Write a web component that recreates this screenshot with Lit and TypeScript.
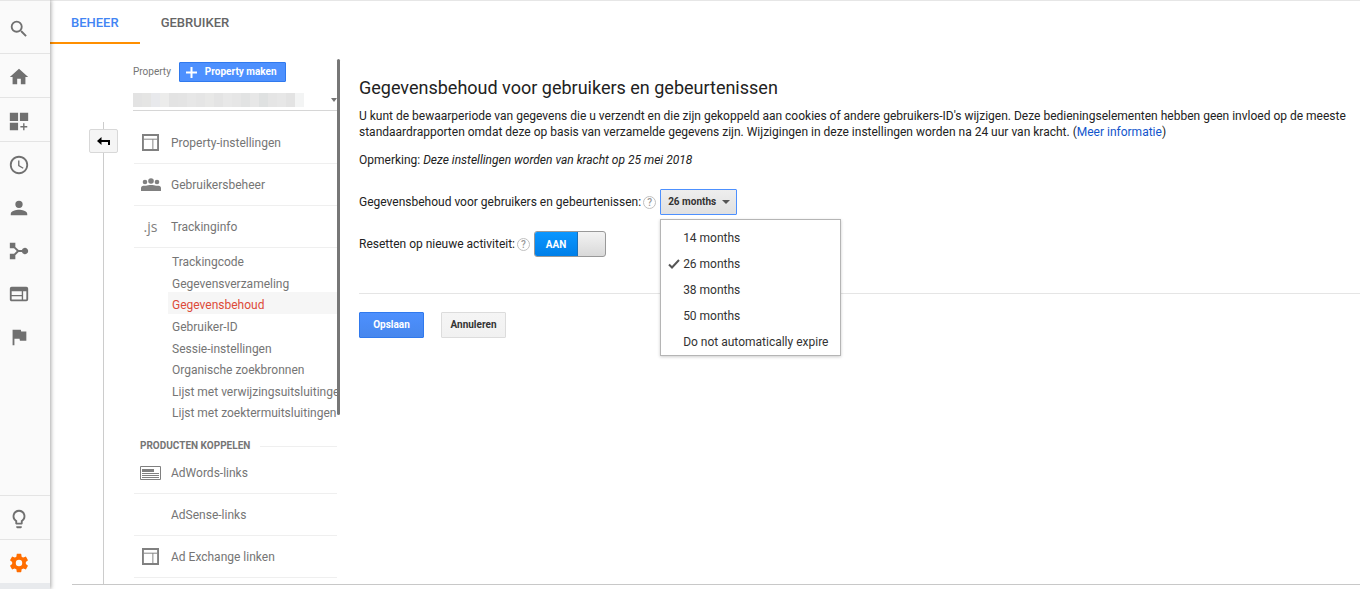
import { LitElement, html, css, svg, nothing } from "lit";
import { customElement, state } from "lit/decorators.js";
import { classMap } from "lit/directives/class-map.js";

const railIcons = {
  search: svg`<path d="M15.500 14h-.79l-.28-.27A6.470 6.470 0 0 0 16 9.500 6.500 6.500 0 1 0 9.500 16c1.610 0 3.090-.59 4.230-1.570l.27.28v.79l5 4.990L20.490 19l-4.990-5zm-6 0C7.010 14 5 11.990 5 9.500S7.010 5 9.500 5 14 7.010 14 9.500 11.990 14 9.500 14z"/>`,
  home: svg`<path d="M10 20v-6h4v6h5v-8h3L12 3 2 12h3v8z"/>`,
  dashboard: svg`<path d="M2 3h9v9H2zM13 3h9v9h-9zM2 14h9v8H2zM16.500 14.500h1.500v3h3v1.500h-3v3h-1.500v-3h-3v-1.500h3z"/>`,
  clock: svg`<path d="M11.990 2C6.470 2 2 6.480 2 12s4.470 10 9.990 10C17.520 22 22 17.520 22 12S17.520 2 11.990 2zM12 20a8 8 0 1 1 0-16 8 8 0 0 1 0 16zm.5-13H11v6l5.250 3.150.75-1.230-4.500-2.670z"/>`,
  person: svg`<path d="M12 12a4 4 0 1 0 0-8 4 4 0 0 0 0 8zm0 2c-3 0-9 1.300-9 4.500V20h18v-1.500c0-3.200-6-4.500-9-4.500z"/>`,
  flow: svg`<path d="M2 3h6v4.600l3.600 3.400h3.600a3.500 3.500 0 1 1 0 2h-3.600L8 16.600V21H2v-6h4.600l3-3-3-3H2z"/>`,
  web: svg`<path d="M20 4H4a2 2 0 0 0-2 2v12c0 1.100.9 2 2 2h16a2 2 0 0 0 2-2V6a2 2 0 0 0-2-2zm-5 14H4v-3.500h11V18zm0-5H4V9h11v4zm5 5h-3.500V9H20v9z"/>`,
  flag: svg`<path d="M14.400 6 14 4H5v17h2v-7h5.600l.4 2h7V6z"/>`,
  bulb: svg`<path d="M9 21c0 .55.45 1 1 1h4c.55 0 1-.45 1-1v-1H9v1zm3-19a7 7 0 0 0-4 12.740V17c0 .55.45 1 1 1h6c.55 0 1-.45 1-1v-2.260A7 7 0 0 0 12 2zm2.850 11.100-.85.6V16h-4v-2.300l-.85-.6A5 5 0 1 1 14.850 13.100z"/>`,
  gear: svg`<path d="M19.430 12.980c.04-.32.07-.64.07-.98s-.03-.66-.07-.98l2.110-1.650c.19-.15.24-.42.12-.64l-2-3.460c-.12-.22-.39-.3-.61-.22l-2.490 1c-.52-.4-1.080-.73-1.690-.98l-.38-2.650A.49.49 0 0 0 14 2h-4c-.25 0-.46.18-.49.42l-.38 2.650c-.61.25-1.170.59-1.690.98l-2.490-1c-.23-.09-.49 0-.61.22l-2 3.460c-.13.22-.07.49.12.64l2.110 1.650c-.04.32-.07.65-.07.98s.03.66.07.98l-2.110 1.650c-.19.15-.24.42-.12.64l2 3.460c.12.22.39.3.61.22l2.490-1c.52.4 1.080.73 1.690.98l.38 2.650c.03.24.24.42.49.42h4c.25 0 .46-.18.49-.42l.38-2.650c.61-.25 1.170-.59 1.690-.98l2.490 1c.23.09.49 0 .61-.22l2-3.460c.12-.22.07-.49-.12-.64zM12 15.500a3.500 3.500 0 1 1 0-7 3.500 3.500 0 0 1 0 7z"/>`,
};

type RailIcon = keyof typeof railIcons;

@customElement("nav-rail")
class NavRail extends LitElement {
  static styles = css`
    :host {
      display: flex;
      flex-direction: column;
      background: #fafafa;
      border-top: 1px solid #e6e6e6;
      box-shadow: 1px 0 4px rgba(0, 0, 0, 0.35);
      box-sizing: border-box;
    }
    .item {
      display: flex;
      align-items: center;
      height: 43px;
      padding: 3px 0 0 8px;
      box-sizing: border-box;
      color: #707070;
    }
    .ruled {
      height: 44px;
      border-bottom: 1px solid #e4e4e4;
    }
    .first {
      height: 53px;
    }
    .active {
      color: #ff6d00;
    }
    .spacer {
      flex: 1;
      border-bottom: 1px solid #e4e4e4;
    }
    .foot {
      height: 6px;
      background: #e8eaed;
    }
    .icon {
      width: 22px;
      height: 22px;
      fill: currentColor;
    }
  `;

  private item(name: RailIcon, mods: Record<string, boolean> = {}) {
    return html`<a href="#${name}" aria-label=${name} class=${classMap({ item: true, ...mods })}>
      <svg class="icon" viewBox="0 0 24 24" aria-hidden="true">${railIcons[name]}</svg>
    </a>`;
  }

  render() {
    return html`
      ${this.item("search", { first: true, ruled: true })}
      ${this.item("home", { ruled: true })}
      ${this.item("dashboard", { ruled: true })}
      ${this.item("clock")} ${this.item("person")} ${this.item("flow")}
      ${this.item("web")} ${this.item("flag")}
      <div class="spacer"></div>
      ${this.item("bulb", { ruled: true })} ${this.item("gear", { active: true })}
      <div class="foot"></div>
    `;
  }
}

const menuIcons = {
  layout: svg`<path d="M1 1h16v16H1z" fill="none" stroke="currentColor" stroke-width="2"/><path d="M2 5.500h14M11.500 5.500V16" fill="none" stroke="currentColor"/>`,
  group: svg`<circle cx="4" cy="4" r="2.300"/><circle cx="10" cy="3" r="2.800"/><circle cx="16" cy="4" r="2.300"/><path d="M0 13v-3c0-2 2-2.500 5-2.200C7 6.700 13 6.700 15 7.800c3-.3 5 .2 5 2.200v3z"/>`,
  ad: svg`<path d="M.5.500h20v13H.5z" fill="none" stroke="currentColor"/><path d="M2 3h12v3H2zM2 7h17v1H2zM2 9h17v1H2zM2 11h17v1H2z"/>`,
};

const submenu = [
  "Trackingcode",
  "Gegevensverzameling",
  "Gegevensbehoud",
  "Gebruiker-ID",
  "Sessie-instellingen",
  "Organische zoekbronnen",
  "Lijst met verwijzingsuitsluitingen",
  "Lijst met zoektermuitsluitingen",
];

const mosaic = ["#e3e3e3", "#e5e5e4", "#e8e9ec", "#ececeb", "#e3e3e3", "#e4e4e4", "#e7e7e7", "#e5e5e5", "#e8e8e7", "#e4e4e4", "#e8e8e8", "#e6e6e6", "#e2e3e3", "#e7e7e7", "#dfe1e1", "#e5e5e5", "#e7e7e7", "#e3e3e3", "#f3f4f4"];

@customElement("property-menu")
class PropertyMenu extends LitElement {
  static styles = css`
    :host {
      display: block;
      overflow: hidden;
      color: #757575;
      font-size: 12px;
      line-height: 16px;
    }
    .head {
      display: flex;
      align-items: center;
      gap: 8px;
      font-size: 10px;
    }
    .create {
      display: flex;
      align-items: center;
      gap: 8px;
      height: 20px;
      padding: 0 8px 0 6px;
      border: 1px solid #3079ed;
      border-radius: 1px;
      background: #4d90fe;
      color: #fff;
      font: bold 10px/16px Roboto, sans-serif;
    }
    .plus {
      width: 11px;
      height: 11px;
      stroke: currentColor;
      stroke-width: 2;
    }
    .picker {
      display: flex;
      align-items: center;
      width: 100%;
      height: 21px;
      margin: 8px 0 11px;
      padding: 0;
      border: 0;
      border-bottom: 1px solid #d6d6d6;
      background: none;
    }
    .blocks {
      display: flex;
    }
    .block {
      width: 9px;
      height: 14px;
    }
    .caret {
      margin-left: auto;
      border: 3px solid transparent;
      border-top: 4px solid #757575;
      border-bottom: 0;
    }
    .row {
      display: flex;
      align-items: center;
      gap: 10px;
      height: 42px;
      box-sizing: border-box;
      margin-left: 1px;
      padding-left: 6px;
      border-bottom: 1px solid #efefef;
      color: inherit;
      text-decoration: none;
    }
    .glyph {
      display: flex;
      justify-content: center;
      width: 21px;
      color: #808080;
      font: 14px/18px "Open Sans", sans-serif;
    }
    .glyph svg {
      fill: currentColor;
    }
    .subs {
      display: grid;
      grid-auto-rows: 1fr;
      min-height: 173px;
      margin: 1px 0 0 35px;
      padding: 0;
      list-style: none;
    }
    .sub {
      display: block;
      height: 100%;
      box-sizing: border-box;
      padding: 6px 0 0 4px;
      color: inherit;
      line-height: 15px;
      text-decoration: none;
      white-space: nowrap;
    }
    .current {
      background: #f6f6f6;
      color: #dd4b39;
    }
    .section {
      display: flex;
      align-items: center;
      gap: 10px;
      margin: 18px 0 0 7px;
      font: bold 10px/12px Roboto, sans-serif;
      white-space: nowrap;
    }
    .section::after {
      content: "";
      flex: 1;
      border-top: 1px solid #efefef;
    }
  `;

  private row(label: string, glyph: unknown) {
    return html`<a class="row" href="#"><span class="glyph">${glyph}</span>${label}</a>`;
  }

  render() {
    const layout = html`<svg width="17" height="17" viewBox="0 0 18 18">${menuIcons.layout}</svg>`;
    return html`
      <div class="head">
        <label for="property">Property</label>
        <button class="create" type="button">
          <svg class="plus" viewBox="0 0 11 11" aria-hidden="true"><path d="M5.500 0v11M0 5.500h11" /></svg>
          Property maken
        </button>
      </div>
      <button class="picker" id="property" type="button">
        <span class="blocks">
          ${mosaic.map((c) => html`<span class="block" style="background:${c}"></span>`)}
        </span>
        <span class="caret"></span>
      </button>
      ${this.row("Property-instellingen", layout)}
      ${this.row("Gebruikersbeheer", html`<svg width="20" height="13" viewBox="0 0 20 13">${menuIcons.group}</svg>`)}
      ${this.row("Trackinginfo", ".js")}
      <ul class="subs">
        ${submenu.map(
          (s) => html`<li><a href="#" class=${classMap({ sub: true, current: s === "Gegevensbehoud" })}>${s}</a></li>`,
        )}
      </ul>
      <div class="section">PRODUCTEN KOPPELEN</div>
      ${this.row("AdWords-links", html`<svg width="21" height="14" viewBox="0 0 21 14">${menuIcons.ad}</svg>`)}
      ${this.row("AdSense-links", nothing)}
      ${this.row("Ad Exchange linken", layout)}
    `;
  }
}

const periods = ["14 months", "26 months", "38 months", "50 months", "Do not automatically expire"];

@customElement("retention-form")
class RetentionForm extends LitElement {
  static styles = css`
    :host {
      display: block;
      color: #222;
      font-size: 12px;
      line-height: 16px;
    }
    .title {
      margin: 0 0 8px;
      font-size: 18px;
      font-weight: 400;
      line-height: 24px;
    }
    .text {
      margin: 0 8px 12px 0;
    }
    .link {
      color: #15c;
      text-decoration: none;
    }
    .fields {
      display: grid;
      gap: 16px;
      margin-top: 21px;
    }
    .field {
      display: flex;
      align-items: center;
    }
    .help {
      width: 13px;
      height: 13px;
      margin: 0 4px 0 2px;
      padding: 0;
      box-sizing: border-box;
      border: 1px solid #c0c0c0;
      border-radius: 50%;
      background: #fff;
      color: #999;
      font: 500 10px/11px Roboto, sans-serif;
    }
    .dropdown {
      position: relative;
      display: flex;
      align-items: center;
    }
    .select {
      appearance: none;
      width: 77px;
      height: 26px;
      padding: 0 0 0 7px;
      border: 1px solid #4d90fe;
      border-radius: 1px;
      outline: 0;
      background: linear-gradient(#eee, #e0e0e0);
      color: #333;
      font: bold 10px/24px Roboto, sans-serif;
    }
    .arrow {
      position: absolute;
      right: 7px;
      border: 4px solid transparent;
      border-top-color: #555;
      border-bottom: 0;
      pointer-events: none;
    }
    .list {
      position: absolute;
      z-index: 1;
      top: 30px;
      left: 0;
      margin: 0;
      padding: 5px 0 0;
      border: 1px solid #b5b5b5;
      background: #fff;
      box-shadow: 0 1px 3px rgba(0, 0, 0, 0.2);
      list-style: none;
    }
    .option {
      display: flex;
      align-items: center;
      width: 100%;
      height: 26px;
      padding: 0 12px 0 7px;
      border: 0;
      background: none;
      color: #333;
      font: 12px/16px Roboto, sans-serif;
      white-space: nowrap;
    }
    .mark {
      flex: none;
      width: 12px;
      height: 10px;
      margin-right: 3px;
      fill: none;
      stroke: #555;
      stroke-width: 2;
    }
    .switch {
      position: relative;
      display: flex;
      width: 72px;
      height: 26px;
      box-sizing: border-box;
      border: 1px solid #999;
      border-radius: 3px;
      overflow: hidden;
      background: linear-gradient(#f3f3f3, #d9d9d9);
    }
    .input {
      position: absolute;
      inset: 0;
      width: 100%;
      height: 100%;
      margin: 0;
      opacity: 0;
    }
    .on {
      width: 42px;
      background: linear-gradient(#0a96ff, #007fe8);
      border-right: 1px solid #1a6fb8;
      color: #fff;
      font-size: 10px;
      font-weight: bold;
      line-height: 25px;
      text-align: center;
    }
    .actions {
      display: flex;
      gap: 17px;
      margin-top: 36px;
      padding-top: 18px;
      border-top: 1px solid #e5e5e5;
    }
    .button {
      width: 65px;
      height: 26px;
      padding: 0;
      border: 1px solid #dcdcdc;
      border-radius: 1px;
      background: linear-gradient(#f5f5f5, #f1f1f1);
      color: #333;
      font: bold 10px/24px Roboto, sans-serif;
    }
    .primary {
      border-color: #3079ed;
      background: linear-gradient(#4d90fe, #4787ed);
      color: #fff;
    }
  `;

  @state() private period = "26 months";
  @state() private open = true;

  private choose(p: string) {
    this.period = p;
    this.open = false;
  }

  private renderList() {
    return html`<ul class="list">
      ${periods.map(
        (p) => html`<li>
          <button class="option" type="button" @click=${() => this.choose(p)}>
            <svg class="mark" viewBox="0 0 12 10" aria-hidden="true">
              ${p === this.period ? svg`<path d="M1 5.500 4 8.500 11 1" />` : nothing}
            </svg>
            ${p}
          </button>
        </li>`,
      )}
    </ul>`;
  }

  render() {
    return html`
      <h1 class="title">Gegevensbehoud voor gebruikers en gebeurtenissen</h1>
      <p class="text">
        U kunt de bewaarperiode van gegevens die u verzendt en die zijn gekoppeld aan cookies of andere
        gebruikers-ID's wijzigen. Deze bedieningselementen hebben geen invloed op de meeste
        standaardrapporten omdat deze op basis van verzamelde gegevens zijn. Wijzigingen in deze
        instellingen worden na 24 uur van kracht. (<a class="link" href="#">Meer informatie</a>)
      </p>
      <p class="text">Opmerking: <em>Deze instellingen worden van kracht op 25 mei 2018</em></p>
      <div class="fields">
        <div class="field">
          <label for="period">Gegevensbehoud voor gebruikers en gebeurtenissen:</label>
          <button class="help" type="button">?</button>
          <div class="dropdown">
            <select
              class="select"
              id="period"
              @change=${(e: Event) => this.choose((e.target as HTMLSelectElement).value)}
            >
              ${periods.map((p) => html`<option ?selected=${p === this.period}>${p}</option>`)}
            </select>
            <span class="arrow"></span>
            ${this.open ? this.renderList() : nothing}
          </div>
        </div>
        <div class="field">
          <label for="reset">Resetten op nieuwe activiteit:</label>
          <button class="help" type="button">?</button>
          <div class="switch">
            <input class="input" id="reset" type="checkbox" checked />
            <span class="on">AAN</span>
          </div>
        </div>
      </div>
      <div class="actions">
        <button class="button primary" type="button">Opslaan</button>
        <button class="button" type="button">Annuleren</button>
      </div>
    `;
  }
}

@customElement("app-root")
class AppRoot extends LitElement {
  static styles = css`
    :host {
      display: grid;
      grid-template-columns: 50px minmax(0, 1fr);
      min-height: 100vh;
      background: #fff;
      font-family: Roboto, sans-serif;
    }
    .rail {
      z-index: 1;
    }
    .main {
      display: flex;
      flex-direction: column;
      border-top: 1px solid #e6e6e6;
    }
    .tabs {
      display: flex;
    }
    .tab {
      padding: 14px 21px 11px;
      border-bottom: 2px solid transparent;
      color: #666;
      font-size: 13px;
      font-weight: 500;
      line-height: 16px;
      text-decoration: none;
    }
    .selected {
      border-color: #ff8f00;
      color: #4285f4;
    }
    .stage {
      display: flex;
      flex: 1;
      margin: 0 0 4px 22px;
      border-bottom: 1px solid #c8c8c8;
    }
    .side {
      display: flex;
      flex-direction: column;
      align-items: center;
      width: 59px;
      padding: 78px 0 0 2px;
    }
    .line {
      width: 1px;
      height: 7px;
      background: #ccc;
    }
    .grow {
      flex: 1;
    }
    .back {
      display: flex;
      align-items: center;
      justify-content: center;
      width: 29px;
      height: 24px;
      padding: 0;
      border: 1px solid #d8d8d8;
      border-radius: 2px;
      background: #f5f5f5;
    }
    .menu {
      width: 204px;
      padding-top: 18px;
    }
    .thumb {
      width: 3px;
      height: 356px;
      margin: 15px 19px 0 0;
      border-radius: 2px;
      background: #777;
    }
    .form {
      flex: 1;
      padding-top: 32px;
    }
  `;

  render() {
    return html`
      <nav-rail class="rail"></nav-rail>
      <div class="main">
        <nav class="tabs">
          <a class="tab selected" href="#beheer">BEHEER</a>
          <a class="tab" href="#gebruiker">GEBRUIKER</a>
        </nav>
        <div class="stage">
          <div class="side">
            <div class="line"></div>
            <button class="back" type="button" aria-label="Terug">
              <svg width="13" height="9" viewBox="0 0 13 9" aria-hidden="true">
                <path d="M0 4 4.500 0v3H13v5h-2V5H4.500v3z" />
              </svg>
            </button>
            <div class="line grow"></div>
          </div>
          <property-menu class="menu"></property-menu>
          <div class="thumb"></div>
          <retention-form class="form"></retention-form>
        </div>
      </div>
    `;
  }
}
